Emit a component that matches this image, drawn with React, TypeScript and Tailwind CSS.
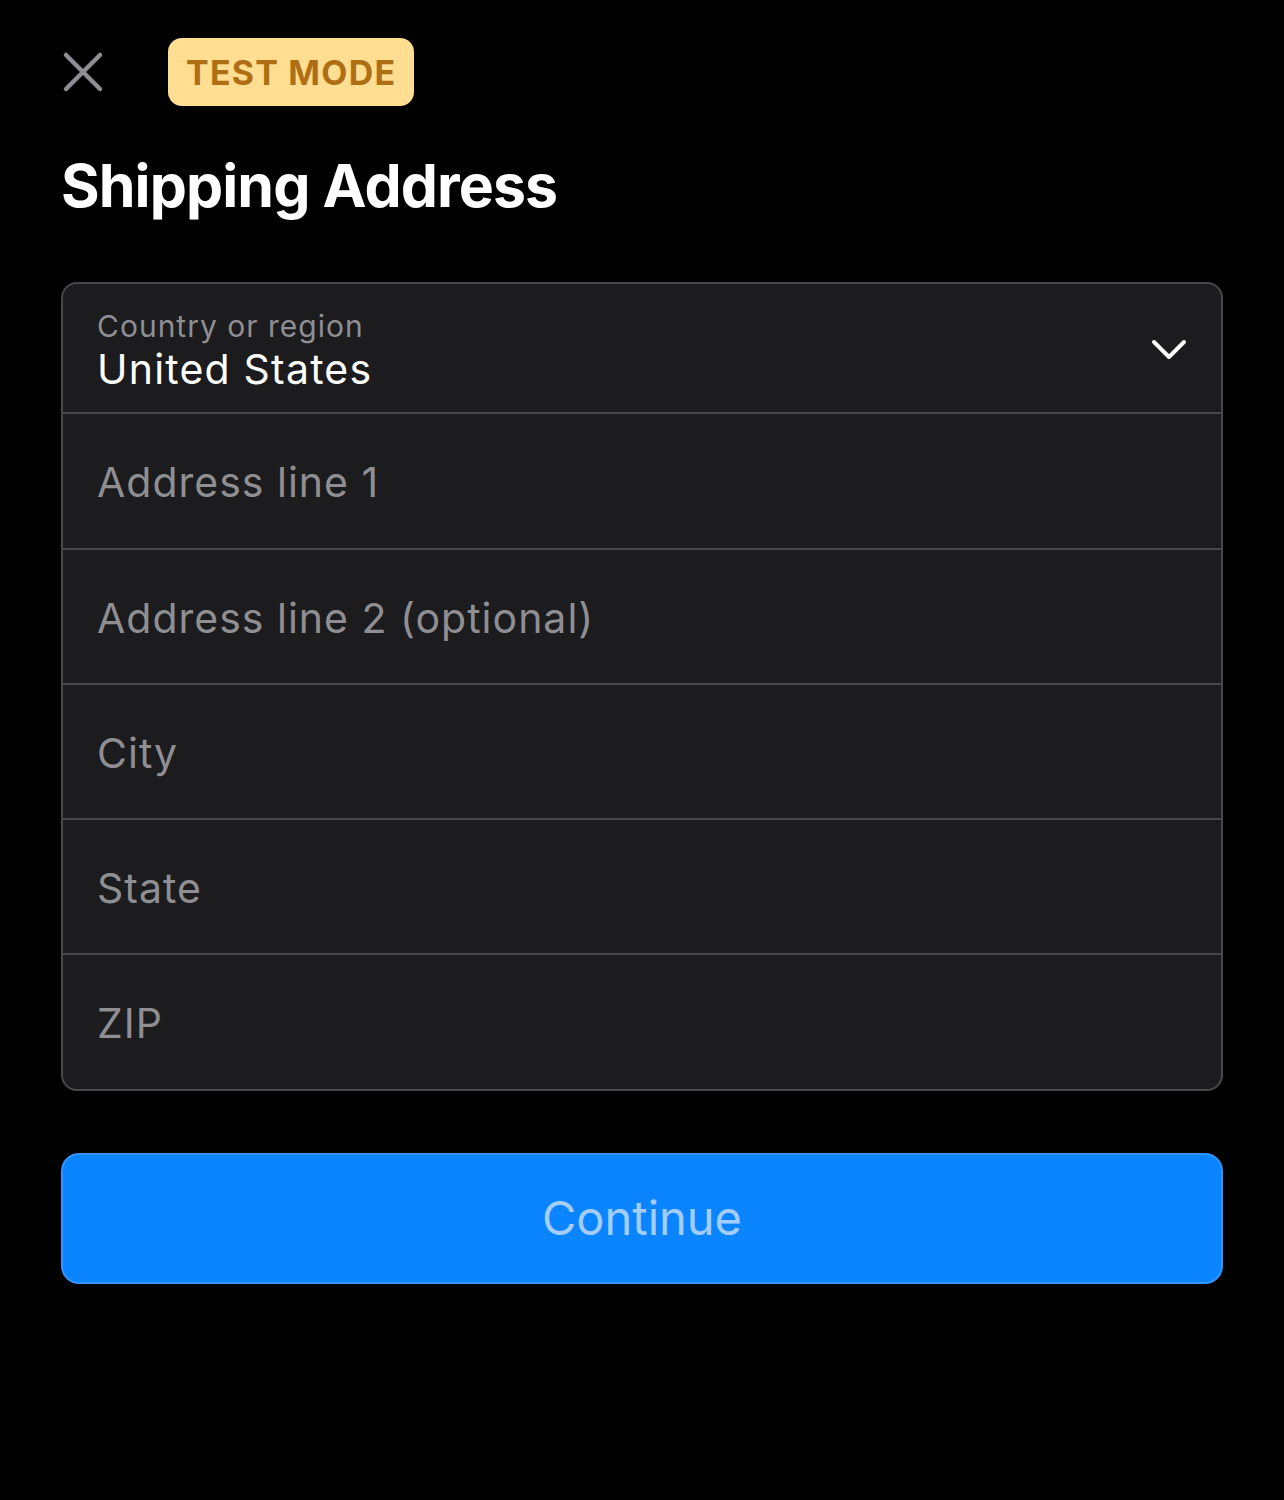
import React from "react";

const fields = ["Address line 1", "Address line 2 (optional)", "City", "State", "ZIP"];

const App: React.FC = (): React.ReactElement => {
  return (
    <div className="min-h-[1500px] w-full bg-black font-['Inter',sans-serif] px-[61px]">
      <div className="flex items-center pt-[38px]">
        <button className="w-[50px] h-[50px] flex items-center justify-start">
          <svg width="44" height="44" viewBox="0 0 44 44" fill="none">
            <path d="M5 5 L39 39 M39 5 L5 39" stroke="#8e8e93" strokeWidth="4.5" strokeLinecap="round" />
          </svg>
        </button>
        <div className="ml-[57px] h-[68px] px-[18px] flex items-center rounded-[14px] bg-[#ffde92]">
          <span className="text-[34px] font-bold text-[#b06e12] tracking-[1.2px]">TEST MODE</span>
        </div>
      </div>

      <h1 className="mt-[44px] text-[59px] leading-[72px] font-bold text-white tracking-[-0.9px]">
        Shipping Address
      </h1>

      <div className="mt-[60px] rounded-[16px] border-2 border-[#48484a] bg-[#1c1c1e] overflow-hidden">
        <div className="h-[128px] flex items-center justify-between pl-[34px] pr-[34px] pt-[6px]">
          <div className="flex flex-col">
            <span className="text-[30px] leading-[36px] text-[#8e8e93] tracking-[1px]">Country or region</span>
            <span className="text-[41px] leading-[50px] text-white tracking-[1.2px]">United States</span>
          </div>
          <svg width="36" height="22" viewBox="0 0 36 22" fill="none" className="-mt-[2px]">
            <path d="M3 3 L18 18 L33 3" stroke="#ffffff" strokeWidth="4" strokeLinecap="round" strokeLinejoin="round" />
          </svg>
        </div>
        {fields.map((f, i) => (
          <div
            key={f}
            className={`${i === 0 || i === fields.length - 1 ? "h-[136px]" : "h-[135px]"} border-t-2 border-[#48484a] flex items-center pl-[34px] pt-[4px]`}
          >
            <span className="text-[41px] text-[#8e8e93] tracking-[1px]">{f}</span>
          </div>
        ))}
      </div>

      <button className="mt-[62px] w-full h-[131px] rounded-[18px] bg-[#0a84ff] border-2 border-[#3393ff] flex items-center justify-center">
        <span className="text-[47px] text-[#a3cdff]">Continue</span>
      </button>
    </div>
  );
};

export default App;
